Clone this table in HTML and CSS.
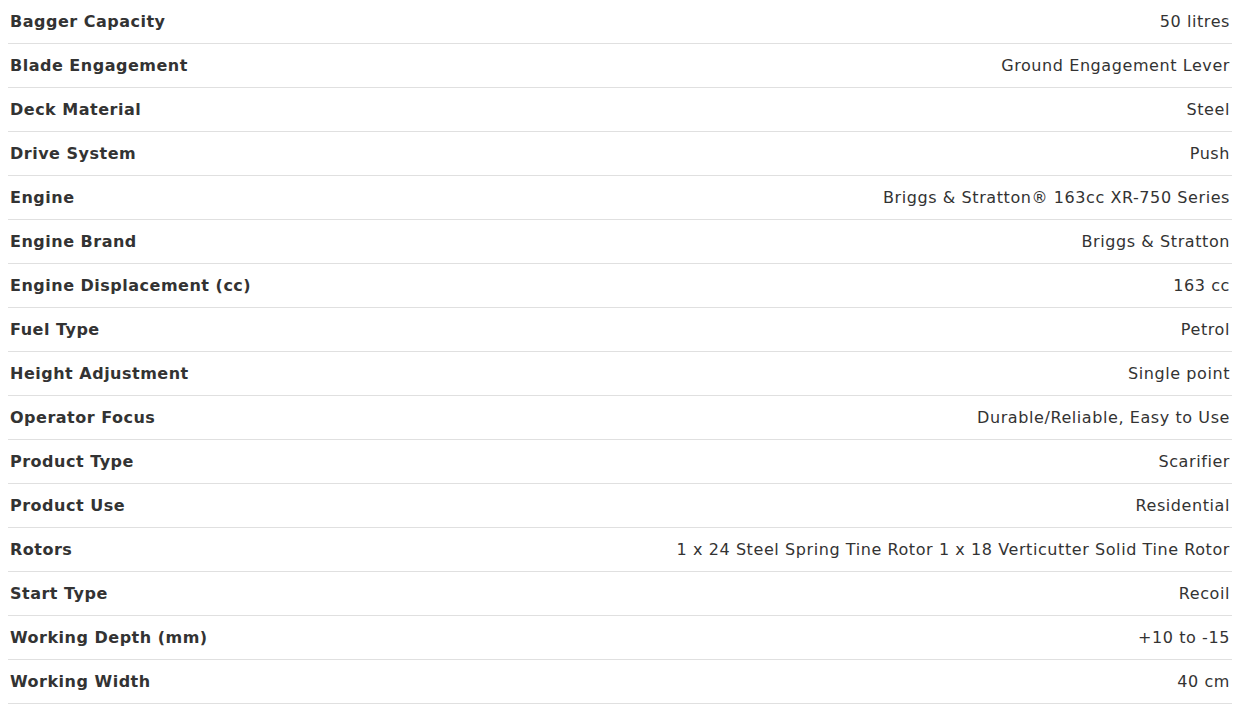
FILE: index.html
```html
<!DOCTYPE html>
<html lang="en">
<head>
  <meta charset="UTF-8" />
  <meta name="viewport" content="width=device-width, initial-scale=1.0" />
  <title>Specifications</title>
  <link rel="stylesheet" href="styles.css">
</head>
<body>
  <table class="specs">
    <tbody>
      <tr><th>Bagger Capacity</th><td>50 litres</td></tr>
      <tr><th>Blade Engagement</th><td>Ground Engagement Lever</td></tr>
      <tr><th>Deck Material</th><td>Steel</td></tr>
      <tr><th>Drive System</th><td>Push</td></tr>
      <tr><th>Engine</th><td>Briggs &amp; Stratton&reg; 163cc XR-750 Series</td></tr>
      <tr><th>Engine Brand</th><td>Briggs &amp; Stratton</td></tr>
      <tr><th>Engine Displacement (cc)</th><td>163 cc</td></tr>
      <tr><th>Fuel Type</th><td>Petrol</td></tr>
      <tr><th>Height Adjustment</th><td>Single point</td></tr>
      <tr><th>Operator Focus</th><td>Durable/Reliable, Easy to Use</td></tr>
      <tr><th>Product Type</th><td>Scarifier</td></tr>
      <tr><th>Product Use</th><td>Residential</td></tr>
      <tr><th>Rotors</th><td>1 x 24 Steel Spring Tine Rotor 1 x 18 Verticutter Solid Tine Rotor</td></tr>
      <tr><th>Start Type</th><td>Recoil</td></tr>
      <tr><th>Working Depth (mm)</th><td>+10 to -15</td></tr>
      <tr><th>Working Width</th><td>40 cm</td></tr>
    </tbody>
  </table>
</body>
</html>
```

FILE: styles.css
```css
body {
  margin: 0;
  padding: 0 21px 0 8px;
  background: #fff;
  font-family: "DejaVu Sans", Verdana, sans-serif;
  font-size: 16px;
  color: #333;
}
.specs {
  width: 100%;
  border-collapse: collapse;
}
.specs th,
.specs td {
  height: 43px;
  padding: 0 2px;
  border-bottom: 1px solid #e0e0e0;
  vertical-align: middle;
  line-height: 20px;
}
.specs th {
  text-align: left;
  font-weight: bold;
  letter-spacing: 0.5px;
  white-space: nowrap;
}
.specs td {
  text-align: right;
  font-weight: normal;
  letter-spacing: 0.58px;
}
```
